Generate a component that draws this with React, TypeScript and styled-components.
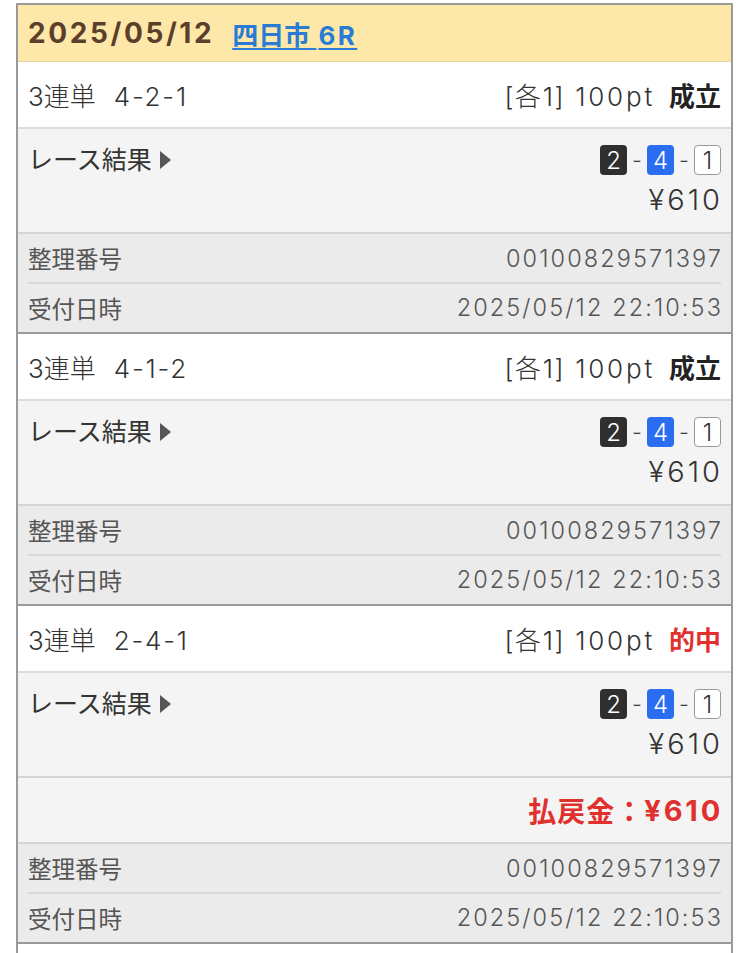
import React from 'react'
import styled, { createGlobalStyle } from 'styled-components'

const GlobalStyle = createGlobalStyle`
  body {
    margin: 0;
    background: #fff;
    font-family: Inter, "Noto Sans CJK JP", sans-serif;
    color: #333;
  }
`

type Bet = {
  kind: string
  combo: string
  status: string
  hit?: boolean
  payout?: string
}

const bets: Bet[] = [
  { kind: '3連単', combo: '4-2-1', status: '成立' },
  { kind: '3連単', combo: '4-1-2', status: '成立' },
  { kind: '3連単', combo: '2-4-1', status: '的中', hit: true, payout: '¥610' },
]

export default function App() {
  return <>
    <GlobalStyle />
    <Page>
      <Panel>
        <Header>
          <DateText>2025/05/12</DateText>
          <RaceLink href="#">四日市 <RaceNo>6R</RaceNo></RaceLink>
        </Header>
        {bets.map((bet, i) => (
          <Card key={i}>
            <BetRow>
              <BetName>{bet.kind}<Combo>{bet.combo}</Combo></BetName>
              <BetRight>
                <Unit>[各1]</Unit>
                <Points>100pt</Points>
                <Status hit={bet.hit}>{bet.status}</Status>
              </BetRight>
            </BetRow>
            <ResultRow>
              <ResultLabel>レース結果<Arrow /></ResultLabel>
              <ResultRight>
                <Badges>
                  <Badge tone="black">2</Badge>
                  <Dash>-</Dash>
                  <Badge tone="blue">4</Badge>
                  <Dash>-</Dash>
                  <Badge tone="white">1</Badge>
                </Badges>
                <Price>¥610</Price>
              </ResultRight>
            </ResultRow>
            {bet.payout && (
              <PayoutRow>払戻金：<PayoutNum>{bet.payout}</PayoutNum></PayoutRow>
            )}
            <InfoBlock>
              <InfoLine>
                <span>整理番号</span>
                <InfoValue>00100829571397</InfoValue>
              </InfoLine>
              <InfoLine>
                <span>受付日時</span>
                <InfoValue>2025/05/12 22:10:53</InfoValue>
              </InfoLine>
            </InfoBlock>
          </Card>
        ))}
      </Panel>
    </Page>
  </>
}

const Page = styled.div`
  padding: 3px 17px 0 16px;
`

const Panel = styled.div`
  border: 2px solid #9a9a9a;
  border-bottom: none;
  padding-bottom: 30px;
`

const Header = styled.div`
  display: flex;
  align-items: center;
  gap: 18px;
  height: 56px;
  padding: 0 10px;
  background: #fde8aa;
  border-bottom: 1px solid #e6d3a0;
`

const DateText = styled.span`
  font-size: 28px;
  font-weight: 700;
  color: #5b3f2a;
  letter-spacing: 2.6px;
`

const RaceLink = styled.a`
  font-size: 26px;
  font-weight: 700;
  color: #2a7bd4;
  text-decoration: underline;
  text-underline-offset: 3px;
`

const RaceNo = styled.span`
  letter-spacing: 2.4px;
  margin-left: 2px;
`

const Card = styled.div`
  border-bottom: 2px solid #9a9a9a;
`

const BetRow = styled.div`
  display: flex;
  align-items: center;
  justify-content: space-between;
  height: 65px;
  padding: 0 10px;
  background: #fff;
  border-bottom: 2px solid #dcdcdc;
  font-size: 26px;
  font-weight: 300;
  color: #333;
`

const BetName = styled.span`
  display: flex;
  align-items: baseline;
  gap: 18px;
`

const Combo = styled.span`
  letter-spacing: 1.8px;
`

const BetRight = styled.span`
  display: flex;
  align-items: baseline;
`

const Unit = styled.span`
  letter-spacing: 1.6px;
`

const Points = styled.span`
  margin-left: 10px;
  letter-spacing: 2.8px;
`

const Status = styled.span<{ hit?: boolean }>`
  margin-left: 14px;
  font-weight: 700;
  color: ${p => (p.hit ? '#e0312f' : '#222')};
`

const ResultRow = styled.div`
  display: flex;
  justify-content: space-between;
  align-items: flex-start;
  height: 105px;
  padding: 11px 10px 0;
  box-sizing: border-box;
  background: #f4f4f4;
  border-bottom: 2px solid #d4d4d4;
`

const ResultLabel = styled.span`
  display: flex;
  align-items: center;
  font-size: 25px;
  color: #333;
  line-height: 40px;
`

const Arrow = styled.span`
  width: 0;
  height: 0;
  margin-left: 8px;
  border-top: 9px solid transparent;
  border-bottom: 9px solid transparent;
  border-left: 11px solid #555;
`

const ResultRight = styled.div`
  display: flex;
  flex-direction: column;
  align-items: flex-end;
`

const Badges = styled.div`
  display: flex;
  align-items: center;
  height: 40px;
`

const Badge = styled.span<{ tone: 'black' | 'blue' | 'white' }>`
  display: inline-flex;
  align-items: center;
  justify-content: center;
  width: 27px;
  height: 30px;
  box-sizing: border-box;
  border-radius: 4px;
  font-size: 24px;
  font-weight: 300;
  background: ${p => (p.tone === 'black' ? '#2f2f2f' : p.tone === 'blue' ? '#2b6df0' : '#fff')};
  color: ${p => (p.tone === 'white' ? '#333' : '#fff')};
  border: ${p => (p.tone === 'white' ? '1.5px solid #999' : 'none')};
`

const Dash = styled.span`
  margin: 0 5px;
  font-size: 22px;
  font-weight: 300;
  color: #444;
`

const Price = styled.span`
  font-size: 29px;
  font-weight: 300;
  line-height: 40px;
  color: #333;
  letter-spacing: 3px;
  margin-right: -2px;
`

const PayoutRow = styled.div`
  display: flex;
  align-items: center;
  justify-content: flex-end;
  height: 64px;
  padding: 0 10px;
  background: #f4f4f4;
  border-bottom: 2px solid #d4d4d4;
  font-size: 28px;
  font-weight: 700;
  color: #e0312f;
  letter-spacing: 1px;
`

const PayoutNum = styled.span`
  font-size: 29px;
  letter-spacing: 2.8px;
  margin-right: -2px;
`

const InfoBlock = styled.div`
  background: #ebebeb;
  padding: 0 10px;
`

const InfoLine = styled.div`
  display: flex;
  justify-content: space-between;
  align-items: center;
  height: 48px;
  font-size: 23.5px;
  color: #555;

  & + & {
    border-top: 2px solid #d8d8d8;
    height: 47px;
    padding-bottom: 1px;
  }
`

const InfoValue = styled.span`
  font-weight: 300;
  letter-spacing: 2.1px;
  margin-right: -2px;
`
